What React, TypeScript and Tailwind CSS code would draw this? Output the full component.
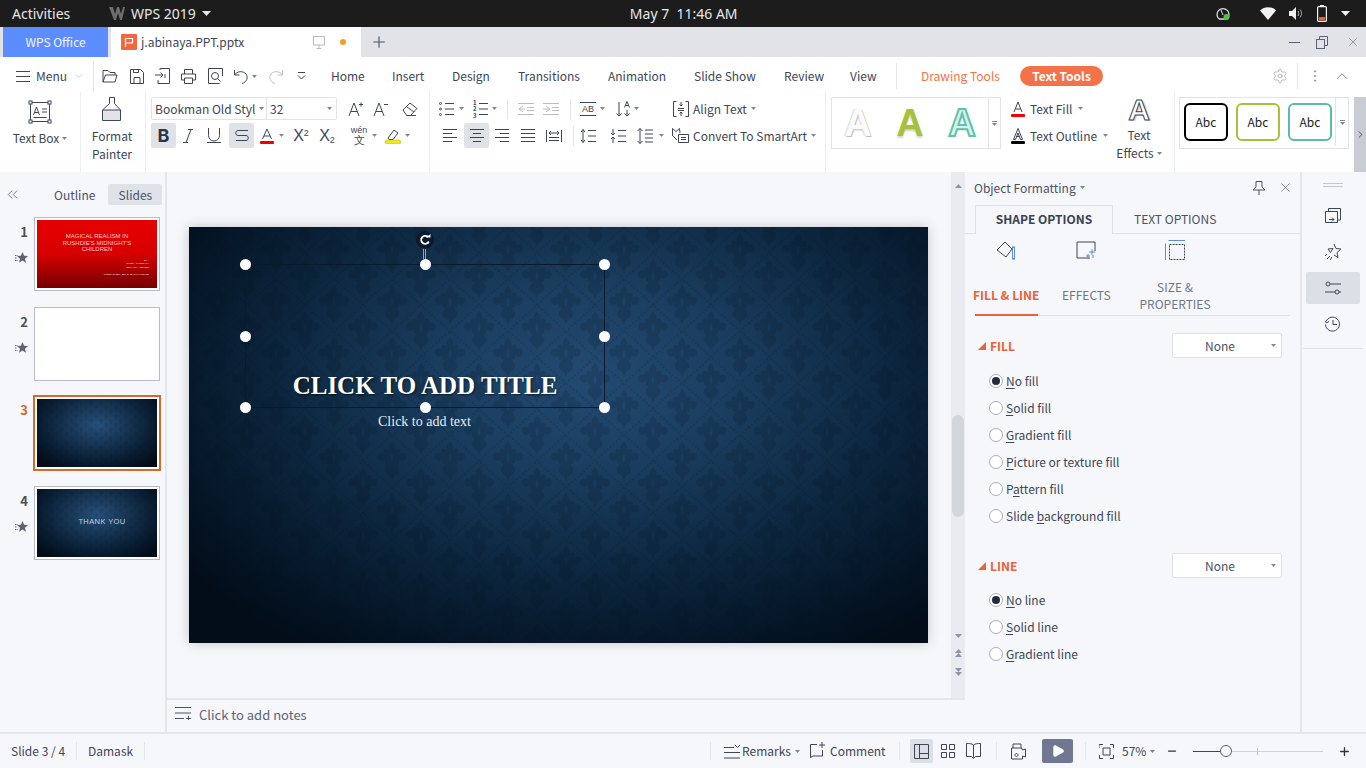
import type { ReactNode } from "react";
import { ChevronDown, ChevronUp, ChevronsLeft, ChevronRight, Minus, Plus, X, Play, Settings, MoreVertical } from "lucide-react";

const UI = "font-['Noto_Sans_CJK_SC','Noto_Sans',sans-serif]";

function Ic({ w = 16, h = 16, className = "", sw = 1, children }: { w?: number; h?: number; className?: string; sw?: number; children: ReactNode }) {
  return (
    <svg width={w} height={h} viewBox={`0 0 ${w} ${h}`} fill="none" stroke="currentColor" strokeWidth={sw} className={`shrink-0 ${className}`}>
      {children}
    </svg>
  );
}

function Caret({ className = "" }: { className?: string }) {
  return (
    <svg width="5" height="3" viewBox="0 0 5 3" className={`shrink-0 ${className}`}>
      <path d="M0 0h5L2.500 3z" fill="#7d8597" />
    </svg>
  );
}

function Sep({ className = "" }: { className?: string }) {
  return <div className={`w-px bg-[#e3e5ea] shrink-0 ${className}`} />;
}

// damask wallpaper used on the slide and the thumbnails
function Damask({ id, scale = 1, opacity = 0.15 }: { id: string; scale?: number; opacity?: number }) {
  const motif = "M0 -20C2 -16 5 -15 3 -11C7 -14 10 -11 8 -8C13 -10 17 -6 14 -2C12 1 9 0 7 -2C8 2 6 4 4 2C6 6 9 8 6 12C4 15 2 13 0 20C-2 13 -4 15 -6 12C-9 8 -6 6 -4 2C-6 4 -8 2 -7 -2C-9 0 -12 1 -14 -2C-17 -6 -13 -10 -8 -8C-10 -11 -7 -14 -3 -11C-5 -15 -2 -16 0 -20ZM0 -8C-2 -5 -2 -2 0 2C2 -2 2 -5 0 -8Z";
  return (
    <svg className="absolute inset-0 w-full h-full" style={{ opacity }}>
      <defs>
        <pattern id={id} width="58" height="52" patternUnits="userSpaceOnUse" patternTransform={`scale(${scale})`}>
          <g fill="#04121f" fillRule="evenodd">
            <path d={motif} transform="translate(29 26)" />
            <path d={motif} transform="translate(0 0)" />
            <path d={motif} transform="translate(58 0)" />
            <path d={motif} transform="translate(0 52)" />
            <path d={motif} transform="translate(58 52)" />
          </g>
          <path d="M0 26L14 13L29 0L44 13L58 26L44 39L29 52L14 39Z" stroke="#04121f" strokeWidth="2" fill="none" strokeDasharray="2 2" />
        </pattern>
      </defs>
      <rect width="100%" height="100%" fill={`url(#${id})`} />
    </svg>
  );
}

function TopBar() {
  return (
    <div className="h-[27px] bg-[#1c1c1c] text-[#e6e6e6] text-[14px] font-['Noto_Sans',sans-serif] flex items-center shrink-0">
      <span className="ml-[12px] w-[97px]">Activities</span>
      <svg width="16" height="13" viewBox="0 0 16 13" className="shrink-0">
        <path d="M0 0h4l2 7 2-7h2l2 7 2-7h2l-3 13h-2L9 6l-2 7H5z" fill="#6d6d6d" />
      </svg>
      <span className="ml-[6px]">WPS 2019</span>
      <svg width="9" height="5" viewBox="0 0 9 5" className="ml-[6px]">
        <path d="M0 0h9L4.500 5z" fill="#e6e6e6" />
      </svg>
      <span className="ml-[419px] w-[115px] whitespace-pre">May 7  11:46 AM</span>
      <svg width="14" height="15" viewBox="0 0 14 15" className="ml-[471px]">
        <path d="M3 13A6 6 0 1 1 11 13M3 13h8" fill="none" stroke="#dcdcdc" strokeWidth="1.300" />
        <path d="M5 4l2 5" stroke="#dcdcdc" />
        <circle cx="10.500" cy="11" r="3" fill="#4fc04f" />
      </svg>
      <svg width="16" height="13" viewBox="0 0 16 13" className="ml-[30px]">
        <path d="M0 3.500C4 -1 12 -1 16 3.500L8 13z" fill="#f2f2f2" />
      </svg>
      <svg width="14" height="13" viewBox="0 0 14 13" className="ml-[13px]">
        <path d="M0 4h3l4-4v13l-4-4H0z" fill="#f2f2f2" />
        <path d="M9 4c1 1.500 1 3.500 0 5M11 2.500c2 2.500 2 5.500 0 8" stroke="#bbb" fill="none" />
      </svg>
      <svg width="10" height="17" viewBox="0 0 10 17" className="ml-[14px]">
        <rect x="3" y="0" width="4" height="2" fill="#f2f2f2" />
        <rect x=".6" y="1.600" width="8.800" height="14.800" rx="1" fill="none" stroke="#f2f2f2" strokeWidth="1.200" />
        <rect x="2" y="12" width="6" height="3.500" fill="#e8622c" />
      </svg>
      <svg width="9" height="5" viewBox="0 0 9 5" className="ml-[14px]">
        <path d="M0 0h9L4.500 5z" fill="#f2f2f2" />
      </svg>
    </div>
  );
}

function TabBar() {
  return (
    <div className={`h-[30px] bg-[#e1e3e8] flex items-stretch shrink-0 text-[12px] ${UI}`}>
      <div className="ml-[3px] w-[105px] bg-[#5c8dff] text-white/90 flex items-center justify-center">WPS Office</div>
      <div className="ml-[3px] w-[250px] bg-white text-[#3e4557] flex items-center">
        <div className="ml-[10px] w-[16px] h-[16px] bg-[#f2683c] rounded-[1px] flex items-center justify-center">
          <svg width="10" height="10" viewBox="0 0 10 10">
            <path d="M1.500 10V1.500H8.500V6H1.500" fill="none" stroke="white" strokeWidth="1.200" />
          </svg>
        </div>
        <span className="ml-[4px] w-[172px]">j.abinaya.PPT.pptx</span>
        <Ic w={12} h={14} className="text-[#b6bbc6]">
          <rect x=".5" y="1.500" width="11" height="8.500" />
          <path d="M6 10v3M3.500 13.500h5" />
        </Ic>
        <div className="ml-[15px] w-[6px] h-[6px] rounded-full bg-[#f0a020]" />
      </div>
      <Plus size={18} strokeWidth={1.500} className="ml-[9px] self-center text-[#4a5266]" />
      <div className="ml-auto flex items-center text-[#5a6275]">
        <Ic w={11} h={11} className="mr-[16px]"><path d="M0 5.500h11" /></Ic>
        <Ic w={12} h={13} className="mr-[18px]">
          <rect x=".5" y="3.500" width="8" height="9" />
          <path d="M3.500 3.500V.5h8v9H8.500" />
        </Ic>
        <X size={14} strokeWidth={1} className="mr-[6px]" />
      </div>
    </div>
  );
}

const menuTabs: [string, string][] = [
  ["Home", "w-[61px]"],
  ["Insert", "w-[60px]"],
  ["Design", "w-[66px]"],
  ["Transitions", "w-[90px]"],
  ["Animation", "w-[86px]"],
  ["Slide Show", "w-[90px]"],
  ["Review", "w-[66px]"],
  ["View", "w-[46px]"],
];

function MenuRow() {
  return (
    <div className={`h-[35px] pt-[3px] bg-white flex items-center shrink-0 text-[12px] text-[#3e4557] ${UI}`}>
      <Ic w={14} h={11} className="ml-[16px]"><path d="M0 .5h14M0 5.500h14M0 10.500h14" /></Ic>
      <span className="ml-[6px] w-[29px]">Menu</span>
      <ChevronDown size={12} strokeWidth={1} className="ml-[8px] text-[#9aa0ad]" />
      <Sep className="h-[30px] ml-[8px]" />
      <Ic w={16} h={14} className="ml-[8px]"><path d="M1 13V1.500h5l2 2h5V6M1 13h12l2-7H3.500z" /></Ic>
      <Ic w={14} h={15} className="ml-[12px]"><path d="M.5.5h10l3 3v11H.5zM4 14.500V8.500h6v6M3.500.5v3h5v-3" /></Ic>
      <Ic w={15} h={16} className="ml-[11px]"><path d="M5 2V.5h9.500v15H3V12M0 7h8M5.500 4.500L8 7 5.500 9.500M10 10v-4" /></Ic>
      <Ic w={15} h={15} className="ml-[11px]"><path d="M3.500 5V.5h8V5M3 11H.5V5h14v6H12M3.500 9h8v5.500h-8z" /></Ic>
      <Ic w={15} h={16} className="ml-[12px]"><path d="M14.500 8V.5H.5v15h11" /><circle cx="7" cy="8" r="3.500" /><path d="M9.500 10.500l3 3" /></Ic>
      <Ic w={14} h={15} className="ml-[11px]"><path d="M.5 1v5h5M.5 6C3 2 9 1.500 12 5c2.500 3 1 8-4 9.500" /></Ic>
      <Caret className="ml-[4px]" />
      <Ic w={14} h={15} className="ml-[12px] text-[#b9bdc7]"><path d="M13.500 1v5h-5M13.500 6C11 2 5 1.500 2 5c-2.500 3-1 8 4 9.500" /></Ic>
      <Ic w={9} h={9} className="ml-[14px]"><path d="M1 .5h7M1 3.500L4.500 7 8 3.500" /></Ic>
      <div className="ml-[25px] flex">
        {menuTabs.map(([t, w]) => (
          <span key={t} className={`${w} whitespace-nowrap`}>{t}</span>
        ))}
      </div>
      <Sep className="h-[26px]" />
      <span className="ml-[24px] w-[79px] whitespace-nowrap text-[#f4724a]">Drawing Tools</span>
      <span className="ml-[20px] w-[83px] h-[20px] rounded-full bg-[#f4724a] text-white font-bold flex items-center justify-center whitespace-nowrap">Text Tools</span>
      <Settings size={16} strokeWidth={1} className="ml-[169px] text-[#8f95a3]" />
      <Sep className="h-[26px] ml-[9px]" />
      <MoreVertical size={16} strokeWidth={1.500} className="ml-[9px] text-[#8f95a3]" />
      <ChevronUp size={18} strokeWidth={1} className="ml-[10px] text-[#5a6275]" />
    </div>
  );
}

function BigA({ className }: { className: string }) {
  return (
    <div className="w-[52px] flex items-center justify-center">
      <span className={`font-['Liberation_Sans',sans-serif] text-[38px] leading-none font-bold ${className}`}>A</span>
    </div>
  );
}

function Ribbon() {
  return (
    <div className={`h-[80px] bg-white flex shrink-0 text-[12px] leading-[18px] text-[#3e4557] ${UI}`}>
      {/* text box */}
      <div className="w-[81px] border-r border-[#eceef2] flex flex-col items-center pt-[5px] shrink-0">
        <Ic w={24} h={24} className="mt-[3px]">
          <rect x="2.500" y="2.500" width="19" height="19" />
          <g fill="white"><rect x="1" y="1" width="3" height="3" /><rect x="20" y="1" width="3" height="3" /><rect x="1" y="20" width="3" height="3" /><rect x="20" y="20" width="3" height="3" /></g>
          <path d="M5.500 15L8.500 7l3 8M6.500 12.500h4M14 9h5M14 12h5M5.500 17.500h13" />
        </Ic>
        <div className="mt-[5px] flex items-center gap-[3px]">Text Box<Caret /></div>
      </div>
      {/* format painter */}
      <div className="w-[65px] border-r border-[#eceef2] pr-[2px] flex flex-col items-center pt-[5px] shrink-0">
        <svg width="20" height="24" viewBox="0 0 20 24" className="shrink-0">
          <rect x="1" y="13" width="18" height="10" fill="#e1e3e8" />
          <path d="M7.500 .5h5v6l6 6.500v10.500H.5V13l7-6.500zM.5 13h18" fill="none" stroke="#3e4557" />
        </svg>
        <div className="mt-[6px] leading-[18px] text-center">Format<br />Painter</div>
      </div>
      {/* font */}
      <div className="w-[284px] border-r border-[#eceef2] pl-[5px] pt-[5px] shrink-0">
        <div className="flex h-[23px] items-center">
          <div className="w-[186px] h-[23px] border border-[#e1e3e8] rounded-[2px] flex items-center">
            <span className="ml-[3px] w-[104px] whitespace-nowrap overflow-hidden">Bookman Old Styl</span>
            <Caret />
            <div className="ml-[2px] w-px h-full bg-[#e1e3e8]" />
            <span className="ml-[3px]">32</span>
            <Caret className="ml-auto mr-[4px]" />
          </div>
          <Ic w={16} h={16} className="ml-[11px]" sw={1}><path d="M1 15L6 2l5 13M3 10.500h6M11 3.500h4M13 1.500v4" /></Ic>
          <Ic w={16} h={16} className="ml-[9px]"><path d="M1 15L6 2l5 13M3 10.500h6M11 3.500h4" /></Ic>
          <Ic w={16} h={14} className="ml-[13px]"><path d="M5 13.500h9M1 8l7-7 7 5.500-7 7.500h-3zM4.500 4.500l7.500 5.500" /></Ic>
        </div>
        <div className="flex h-[25px] items-center mt-[3px]">
          <div className="w-[25px] h-[25px] bg-[#dfe2e7] rounded-[2px] flex items-center justify-center text-[18px] font-bold text-[#2c3448] font-['Inter',sans-serif]">B</div>
          <Ic w={10} h={14} className="ml-[7px]"><path d="M8 .5L3 13.500M5 .5h5M0 13.500h5" /></Ic>
          <Ic w={14} h={15} className="ml-[14px]"><path d="M1.500 0v7.500a5.500 5.500 0 0 0 11 0V0M0 14.500h14" /></Ic>
          <div className="ml-[8px] w-[25px] h-[25px] bg-[#dfe2e7] rounded-[2px] flex items-center justify-center">
            <Ic w={14} h={13}><path d="M13 1.500H3C0 1.500 0 6.500 3 6.500h8c3 0 3 5 0 5H1" /></Ic>
          </div>
          <svg width="14" height="16" viewBox="0 0 14 16" className="ml-[6px] shrink-0">
            <path d="M2.500 11L7 1l4.500 10M4 8h6" fill="none" stroke="#3e4557" />
            <rect x="0" y="13" width="14" height="3" rx="1" fill="#f00000" />
          </svg>
          <Caret className="ml-[5px]" />
          <span className="ml-[5px] w-[24px] text-center text-[16px] font-['Liberation_Sans',sans-serif] font-light">X<sup className="text-[9px]">2</sup></span>
          <span className="ml-[2px] w-[24px] text-center text-[16px] font-['Liberation_Sans',sans-serif] font-light">X<sub className="text-[9px]">2</sub></span>
          <div className="ml-[8px] w-[24px] flex flex-col items-center font-['Liberation_Sans',sans-serif] text-[9px] leading-[9px]">
            wén
            <span className="text-[11px] leading-[10px]">文</span>
          </div>
          <Caret className="ml-[1px]" />
          <svg width="16" height="16" viewBox="0 0 16 16" className="ml-[8px] shrink-0">
            <path d="M3 10l6-8 4 3-5 6.500H4z" fill="none" stroke="#3e4557" />
            <rect x="0.500" y="12" width="15" height="4" rx="1" fill="#f5e71f" stroke="#b8ae10" strokeWidth=".5" />
          </svg>
          <Caret className="ml-[4px]" />
        </div>
      </div>
      {/* paragraph */}
      <div className="w-[396px] border-r border-[#eceef2] pt-[5px] shrink-0">
        <div className="flex h-[23px] items-center">
          <Ic className="ml-[9px]" w={16} h={14}>
            <circle cx="1.500" cy="1.500" r="1" /><circle cx="1.500" cy="7" r="1" /><circle cx="1.500" cy="12.500" r="1" />
            <path d="M6 1.500h9M6 7h9M6 12.500h9" />
          </Ic>
          <Caret className="ml-[4px]" />
          <div className="ml-[9px] w-[16px] h-[14px] relative">
            <Ic w={16} h={14}><path d="M6 1.500h9M6 7h9M6 12.500h9" /></Ic>
            <span className="absolute left-0 top-[-2px] text-[6px] leading-[6.500px] font-bold">1<br />2<br />3</span>
          </div>
          <Caret className="ml-[3px]" />
          <Sep className="h-[20px] ml-[10px]" />
          <Ic className="ml-[10px] text-[#b9bdc7]" w={16} h={12}><path d="M0 .5h16M9 4.500h7M9 7.500h7M0 11.500h16M5 3L1 6l4 3M1 6h6" /></Ic>
          <Ic className="ml-[9px] text-[#b9bdc7]" w={16} h={12}><path d="M0 .5h16M9 4.500h7M9 7.500h7M0 11.500h16M3 3l4 3-4 3M0 6h6" /></Ic>
          <Sep className="h-[20px] ml-[11px]" />
          <div className="ml-[9px] w-[16px] h-[14px] border-y border-[#3e4557] text-[9px] font-['Liberation_Sans',sans-serif] leading-[12px] text-center">AB</div>
          <Caret className="ml-[4px]" />
          <Ic className="ml-[11px]" w={14} h={16}>
            <path d="M3 1v14M.5 12.500L3 15l2.500-2.500M11 9v6M8.500 12.500L11 15l2.500-2.500M8.500 6.500L11 .5l2.500 6M9.500 4.500h3" />
          </Ic>
          <Caret className="ml-[4px]" />
          <Ic className="ml-[34px]" w={16} h={16}>
            <path d="M3.500 .5H.5v15h3M12.500 .5h3v15h-3M5 7.500h6M5 9.500h6M8 1v4M6.500 3.500L8 5l1.500-1.500M8 15v-4M6.500 12.500L8 11l1.500 1.500" />
          </Ic>
          <span className="ml-[4px] w-[54px] whitespace-nowrap">Align Text</span>
          <Caret className="ml-[4px]" />
        </div>
        <div className="flex h-[25px] items-center mt-[3px]">
          <Ic className="ml-[12px]" w={16} h={13}><path d="M1 .5h14M1 4.500h9M1 8.500h14M1 12.500h9" /></Ic>
          <div className="ml-[6px] w-[25px] h-[25px] bg-[#dfe2e7] rounded-[2px] flex items-center justify-center">
            <Ic w={16} h={13}><path d="M1 .5h14M4 4.500h8M1 8.500h14M4 12.500h8" /></Ic>
          </div>
          <Ic className="ml-[5px]" w={16} h={13}><path d="M1 .5h14M6 4.500h9M1 8.500h14M6 12.500h9" /></Ic>
          <Ic className="ml-[10px]" w={16} h={13}><path d="M1 .5h14M1 4.500h14M1 8.500h14M1 12.500h14" /></Ic>
          <Ic className="ml-[10px]" w={16} h={14}><path d="M.5 1v12M15.500 1v12M3 8.500h10M3 11.500h10M3 4h10M5 2L3 4l2 2M11 2l2 2-2 2" /></Ic>
          <Sep className="h-[20px] ml-[11px]" />
          <Ic className="ml-[6px]" w={16} h={14}><path d="M3 .5v13M1 3l2-2.500L5 3M1 11l2 2.500L5 11M8 1.500h8M8 7h8M8 12.500h8" /></Ic>
          <Ic className="ml-[14px]" w={16} h={14}><path d="M3 0v6M1 4l2 2 2-2M3 14V8M1 10l2-2 2 2M8 1.500h8M8 7h8M8 12.500h8" /></Ic>
          <Ic className="ml-[11px]" w={16} h={16}><path d="M3 .5v15M.5 3L3 .5 5.500 3M.5 13L3 15.500 5.500 13M8 2h8M8 6h8M8 10h8M8 14h8" /></Ic>
          <Caret className="ml-[6px]" />
          <Ic className="ml-[8px]" w={17} h={16}><path d="M.5 8V.5L4 3.500 7.500.5 8 5M1 8l4 4M6.500 6.500h10v8h-10zM9 9.500h5M9 11.500h5" /></Ic>
          <span className="ml-[4px] w-[114px] whitespace-nowrap">Convert To SmartArt</span>
          <Caret className="ml-[4px]" />
        </div>
      </div>
      {/* art text */}
      <div className="w-[349px] border-r border-[#eceef2] pt-[5px] pl-[5px] flex shrink-0">
        <div className="w-[170px] h-[52px] border border-[#e1e3e8] flex shrink-0">
          <BigA className="text-[#fbfbfb] [text-shadow:1px_1px_1px_#b9b9b9,-1px_0_1px_#d8d8d8]" />
          <BigA className="text-[#a4c339] [text-shadow:0_2px_2px_#d5d5d5]" />
          <BigA className="text-[#d8f1ea] [-webkit-text-stroke:2px_#5fc2aa]" />
          <div className="flex-1 border-l border-[#e1e3e8] flex flex-col items-center justify-center">
            <div className="w-[5px] h-px bg-[#7d8597] mb-px" />
            <Caret />
          </div>
        </div>
        <div className="ml-[10px] w-[100px] shrink-0">
          <div className="h-[23px] flex items-center">
            <svg width="14" height="16" viewBox="0 0 14 16" className="shrink-0">
              <path d="M3 11L7 1l4 10M4.500 8h5" fill="none" stroke="#3e4557" />
              <rect y="13" width="14" height="3" rx="1" fill="#f00000" />
            </svg>
            <span className="ml-[5px]">Text Fill</span>
            <Caret className="ml-[6px]" />
          </div>
          <div className="h-[25px] mt-[3px] flex items-center">
            <svg width="14" height="16" viewBox="0 0 14 16" className="shrink-0">
              <path d="M2.500 11.500L7 .5l4.500 11h-2L7 5l-2.500 6.500zM5.500 8.500h3" fill="none" stroke="#3e4557" />
              <rect y="13" width="14" height="3" rx="1" fill="#000" />
            </svg>
            <span className="ml-[5px] whitespace-nowrap">Text Outline</span>
            <Caret className="ml-[6px]" />
          </div>
        </div>
        <div className="w-[56px] flex flex-col items-center shrink-0">
          <span className="mt-[-2px] h-[28px] font-['Liberation_Sans',sans-serif] text-[30px] leading-[30px] font-bold text-white [-webkit-text-stroke:1px_#3e4557] [text-shadow:2px_1px_0_#d5d8de]">A</span>
          <div className="mt-[3px] text-center leading-[18px]">Text<div className="flex items-center gap-[3px]">Effects<Caret /></div></div>
        </div>
      </div>
      {/* text styles */}
      <div className="flex-1 pt-[5px] pl-[4px] flex">
        <div className="w-[170px] h-[52px] border border-[#e1e3e8] flex items-center shrink-0 text-[#222] pb-[2px]">
          <div className="ml-[4px] w-[44px] h-[38px] rounded-[6px] border-2 border-black flex items-center justify-center">Abc</div>
          <div className="ml-[8px] w-[44px] h-[38px] rounded-[6px] border-2 border-[#a4c339] flex items-center justify-center">Abc</div>
          <div className="ml-[8px] w-[44px] h-[38px] rounded-[6px] border-2 border-[#5cbca6] flex items-center justify-center">Abc</div>
          <div className="ml-[3px] flex-1 h-full border-l border-[#e1e3e8] flex flex-col items-center justify-center">
            <div className="w-[5px] h-px bg-[#7d8597] mb-px" />
            <Caret />
          </div>
        </div>
        <div className="ml-auto w-[12px] h-[75px] bg-[#c9ccd2] flex items-center justify-center">
          <ChevronRight size={11} className="text-[#3e4557]" />
        </div>
      </div>
    </div>
  );
}

function StarTag() {
  return (
    <svg width="13" height="11" viewBox="0 0 13 11" className="shrink-0">
      <path d="M7.500 0l1.600 3.800 3.900.3-3 2.600.9 4-3.400-2.100-3.400 2.100.9-4-3-2.600 3.900-.3z" fill="#5b6375" />
      <path d="M0 3.500h2.500M0 6h2M0 8.500h2.500" stroke="#5b6375" strokeDasharray="1 .5" />
    </svg>
  );
}

function Thumb({ n, active, star, mt, children }: { n: number; active?: boolean; star?: boolean; mt: string; children: ReactNode }) {
  return (
    <div className={`flex ${mt}`}>
      <div className="w-[34px] shrink-0 pr-[6px] flex flex-col items-end">
        <span className={`mt-[5px] text-[13px] leading-[20px] font-bold ${active ? "text-[#d56a2c]" : "text-[#4a4f5c]"}`}>{n}</span>
        {star && <div className="mt-[10px]"><StarTag /></div>}
      </div>
      <div className={`relative bg-white p-[2px] ${active ? "border-2 border-[#d56a2c] -ml-px w-[128px] h-[76px]" : "border border-[#b9bcc2] w-[126px] h-[74px]"}`}>
        <div className="relative w-full h-full overflow-hidden">{children}</div>
      </div>
    </div>
  );
}

function DarkThumb({ id }: { id: string }) {
  return (
    <>
      <div className="absolute inset-0 bg-[radial-gradient(ellipse_65%_75%_at_50%_38%,#28527d_0%,#173554_40%,#0a2036_70%,#020d18_100%)]" />
      <Damask id={id} scale={0.17} />
    </>
  );
}

function LeftPanel() {
  return (
    <div className="w-[167px] border-r-2 border-[#e4e6ec] shrink-0 text-[#4a5266]">
      <div className="h-[45px] flex items-center">
        <ChevronsLeft size={17} strokeWidth={1} className="ml-[4px] text-[#3e4557]" />
        <span className="ml-[33px]">Outline</span>
        <span className="ml-[13px] w-[54px] h-[21px] rounded-[2px] bg-[#dfe2e8] flex items-center justify-center">Slides</span>
      </div>
      <Thumb n={1} star mt="">
        <div className="absolute inset-0 bg-[linear-gradient(#e60000_0%,#d80000_50%,#760000_100%)] text-[#f3c9c9] font-['Liberation_Sans',sans-serif] text-center">
          <div className="pt-[13px] text-[6px] leading-[6.500px]">MAGICAL REALISM IN<br />RUSHDIE'S MIDNIGHT'S<br />CHILDREN</div>
          <div className="mt-[6px] pr-[8px] text-right text-[2.500px] leading-[3.500px] font-bold">BY :<br />NAME : J.ABINAYA<br />REG. NO : 1234567</div>
          <div className="mt-[4px] pr-[8px] text-right text-[2.500px] font-bold">GUIDE NAME : Ms. R. MAHALAKSHMI</div>
        </div>
      </Thumb>
      <Thumb n={2} star mt="mt-[16px]"><div /></Thumb>
      <Thumb n={3} active mt="mt-[14px]"><DarkThumb id="t3" /></Thumb>
      <Thumb n={4} star mt="mt-[15px]">
        <DarkThumb id="t4" />
        <div className="absolute inset-0 flex items-center justify-center pl-[10px] pb-[2px] text-[7.500px] tracking-[.4px] text-[#c7d1dc] font-['Liberation_Sans',sans-serif]">THANK YOU</div>
      </Thumb>
    </div>
  );
}

function Handle({ className }: { className: string }) {
  return <div className={`absolute w-[11px] h-[11px] rounded-full bg-white ${className}`} />;
}

function Slide() {
  return (
    <div className="ml-[22px] mt-[55px] relative w-[739px] h-[416px] shadow-[0_0_12px_rgba(0,0,0,.2)] bg-[radial-gradient(ellipse_68%_78%_at_54%_36%,#234a72_0%,#1b3e60_28%,#0d2740_60%,#031120_92%,#020d18_100%)] font-['Liberation_Serif',serif]">
      <Damask id="slide" />
      <div className="absolute left-[56px] top-[37px] w-[360px] h-[144px] border border-[#0a1a2a] flex items-end justify-center pb-[6px]">
        <span className="text-white font-bold text-[25px] leading-[30px] [text-shadow:1px_1px_2px_rgba(0,0,0,.6)]">CLICK TO ADD TITLE</span>
        <Handle className="left-[-6px] top-[-6px]" />
        <Handle className="left-[174px] top-[-6px]" />
        <Handle className="right-[-6px] top-[-6px]" />
        <Handle className="left-[-6px] top-[66px]" />
        <Handle className="right-[-6px] top-[66px]" />
        <Handle className="left-[-6px] bottom-[-6px]" />
        <Handle className="left-[174px] bottom-[-6px]" />
        <Handle className="right-[-6px] bottom-[-6px]" />
        <div className="absolute left-[177px] top-[-18px] w-[3px] h-[12px] border-x border-[#9aa3ad]" />
        <div className="absolute left-[170px] top-[-34px] w-[18px] h-[18px] rounded-full bg-[#0b1b2b] flex items-center justify-center">
          <svg width="12" height="12" viewBox="0 0 12 12">
            <path d="M9.800 7.500A4 4 0 1 1 9 3" fill="none" stroke="white" strokeWidth="1.800" />
            <path d="M7 3.500h4.500V0z" fill="white" />
          </svg>
        </div>
      </div>
      <div className="absolute left-[56px] top-[186px] w-[359px] text-center text-[14px] leading-[18px] text-[#e8ecf0]">Click to add text</div>
    </div>
  );
}

function Canvas() {
  return (
    <div className="w-[798px] shrink-0 flex flex-col">
      <div className="flex-1 flex min-h-0">
        <div className="flex-1 min-w-0"><Slide /></div>
        <div className="w-[14px] shrink-0 bg-[#e9ebf0] flex flex-col items-center relative">
          <svg width="7" height="4" viewBox="0 0 7 4" className="mt-[12px]"><path d="M3.500 0L7 4H0z" fill="#8f95a8" /></svg>
          <div className="absolute left-[1px] top-[243px] w-[12px] h-[102px] rounded-[6px] bg-[#d2d5dc]" />
          <div className="mt-auto mb-[22px] flex flex-col items-center gap-[11px]">
            <svg width="7" height="4" viewBox="0 0 7 4"><path d="M0 0h7L3.500 4z" fill="#8f95a8" /></svg>
            <svg width="7" height="8" viewBox="0 0 7 8"><path d="M3.500 0L7 4H0zM3.500 4L7 8H0z" fill="#8f95a8" /></svg>
            <svg width="7" height="8" viewBox="0 0 7 8"><path d="M0 0h7L3.500 4zM0 4h7L3.500 8z" fill="#8f95a8" /></svg>
          </div>
        </div>
      </div>
      <div className="h-[34px] border-t-2 border-[#e4e6ec] pb-[3px] flex items-center shrink-0">
        <Ic w={16} h={13} className="ml-[8px] mb-[2px] text-[#4a5266]"><path d="M0 .5h16M0 6h16M0 11.500h9M11 11.500h5M13.500 9v5" /></Ic>
        <span className="ml-[8px] text-[13px] text-[#5c6478]">Click to add notes</span>
      </div>
    </div>
  );
}

const radiosFill: [string, string, string, boolean][] = [
  ["", "N", "o fill", true],
  ["", "S", "olid fill", false],
  ["", "G", "radient fill", false],
  ["", "P", "icture or texture fill", false],
  ["P", "a", "ttern fill", false],
  ["Slide ", "b", "ackground fill", false],
];

const radiosLine: [string, string, string, boolean][] = [
  ["", "N", "o line", true],
  ["", "S", "olid line", false],
  ["", "G", "radient line", false],
];

function Radio({ pre, key2, post, on }: { pre: string; key2: string; post: string; on: boolean }) {
  return (
    <div className="h-[27px] flex items-center pl-[24px]">
      <div className="w-[14px] h-[14px] rounded-full border border-[#a9afbb] bg-white flex items-center justify-center shrink-0">
        {on && <div className="w-[8px] h-[8px] rounded-full bg-[#232a3d]" />}
      </div>
      <span className="ml-[3px] text-[#3e4557]">
        {pre}
        <span className="underline underline-offset-2 decoration-1">{key2}</span>
        {post}
      </span>
    </div>
  );
}

function Section({ title, mt }: { title: string; mt: string }) {
  return (
    <div className={`flex items-center ${mt}`}>
      <svg width="8" height="8" viewBox="0 0 8 8" className="ml-[13px] shrink-0"><path d="M8 0v8H0z" fill="#e8623a" /></svg>
      <span className="ml-[4px] font-bold text-[#e8623a]">{title}</span>
      <div className="ml-auto mr-[18px] w-[110px] h-[25px] bg-white border border-[#dfe1e7] rounded-[2px] flex items-center relative">
        <span className="w-full text-center text-[#4a5266] pr-[14px]">None</span>
        <Caret className="absolute right-[5px]" />
      </div>
    </div>
  );
}

function RightPanel() {
  return (
    <div className="w-[337px] border-r-2 border-[#e4e6ec] shrink-0 text-[#4a5266]">
      <div className="h-[33px] pb-[2px] flex items-center">
        <span className="ml-[9px] w-[102px] whitespace-nowrap">Object Formatting</span>
        <Caret className="ml-[4px]" />
        <Ic w={14} h={14} className="ml-[167px]"><path d="M4 .5h6L10 6l3 3H1l3-3zM7 9v5" /></Ic>
        <X size={15} strokeWidth={1} className="ml-[12px]" />
      </div>
      <div className="h-[29px] flex border-b border-[#dfe1e7] relative">
        <div className="ml-[10px] w-[138px] h-[29px] pb-[2px] border border-b-0 border-[#dfe1e7] bg-[#f6f7fa] flex items-center justify-center font-bold text-[#3a4155]">SHAPE OPTIONS</div>
        <div className="ml-[21px] pb-[1px] flex items-center">TEXT OPTIONS</div>
      </div>
      <div className="h-[33px] pb-[2px] flex items-center">
        <svg width="20" height="20" viewBox="0 0 20 20" className="ml-[31px] shrink-0">
          <path d="M1 10l8-8 7 7-6 8z" fill="none" stroke="#3e4557" />
          <path d="M4 7l5-5" stroke="#3e4557" />
          <rect x="16.500" y="7" width="2" height="12" fill="none" stroke="#5b8bd9" />
        </svg>
        <svg width="20" height="18" viewBox="0 0 20 18" className="ml-[60px] shrink-0">
          <path d="M14 17H1V1h18v9" fill="none" stroke="#3e4557" />
          <path d="M16 8v6M13 11h6M12 13v4M10 15h4M17 14v3" stroke="#5b8bd9" />
        </svg>
        <svg width="20" height="20" viewBox="0 0 20 20" className="ml-[69px] shrink-0">
          <rect x="4.500" y="4.500" width="15" height="15" fill="none" stroke="#3e4557" strokeDasharray="2 1" />
          <path d="M4 .5h16M4 0v1M20 0v1M.5 4v16M0 4h1M0 20h1" stroke="#5b8bd9" />
        </svg>
      </div>
      <div className="mx-[10px] w-[315px] h-[49px] pt-[8px] flex items-center border-b border-[#dfe1e7] relative">
        <span className="font-bold text-[#e8623a] ml-[-2px] w-[66px] whitespace-nowrap">FILL &amp; LINE</span>
        <span className="ml-[23px] w-[48px] text-[#6f7689]">EFFECTS</span>
        <span className="ml-[29px] w-[72px] text-center leading-[17px] text-[#6f7689]">SIZE &amp; PROPERTIES</span>
        <div className="absolute left-0 bottom-[-1px] w-[63px] h-[2px] bg-[#e8623a]" />
      </div>
      <Section title="FILL" mt="mt-[17px]" />
      <div className="mt-[9px]">
        {radiosFill.map(([a, b, c, on]) => <Radio key={a + b + c} pre={a} key2={b} post={c} on={on} />)}
      </div>
      <Section title="LINE" mt="mt-[24px]" />
      <div className="mt-[8px]">
        {radiosLine.map(([a, b, c, on]) => <Radio key={a + b + c} pre={a} key2={b} post={c} on={on} />)}
      </div>
    </div>
  );
}

function Rail() {
  return (
    <div className="w-[64px] shrink-0 pr-[2px] flex flex-col items-center text-[#3e4557]">
      <div className="mt-[11px] w-[20px] h-[4px] border-y border-[#c4c7cf]" />
      <Ic w={16} h={16} className="mt-[21px]"><path d="M3.500 3V.5h12V12H13M.5 3.500h12v11H.5zM4 11.500h5M7 9.500l2 2-2 2" /></Ic>
      <Ic w={18} h={18} className="mt-[19px]"><path d="M10 1l2 4.500 5 .5-4 3.500 1 5-4-2.500M6.500 9.500L4 6l5-.5zM6 13L3 16M3 11l-2 2M8 14l-2 3" /></Ic>
      <div className="mt-[11px] w-[54px] h-[32px] bg-[#dcdfe6] rounded-[2px] flex items-center justify-center">
        <Ic w={16} h={14}><circle cx="3" cy="3" r="2" /><path d="M5 3h11M0 11h10" /><circle cx="12" cy="11" r="2" /><path d="M14 11h2" /></Ic>
      </div>
      <Ic w={16} h={16} className="mt-[12px]"><path d="M1 5.500a7 7 0 1 1-.5 3M0 5l1.500 2L4 5.500M8 4v4.500h4" /></Ic>
      <div className="mt-[16px] w-[60px] h-px bg-[#dfe1e7]" />
    </div>
  );
}

function StatusBar() {
  return (
    <div className={`h-[36px] border-t-2 border-[#e4e6ec] flex items-center shrink-0 text-[12px] text-[#3e4557] ${UI}`}>
      <span className="ml-[11px] w-[54px] whitespace-nowrap">Slide 3 / 4</span>
      <Sep className="h-[18px] ml-[11px]" />
      <span className="ml-[11px] w-[45px]">Damask</span>
      <Sep className="h-[18px] ml-[11px]" />
      <Sep className="h-[18px] ml-[565px]" />
      <Ic w={16} h={15} className="ml-[13px]"><path d="M0 3.500h10M0 8.500h16M0 14h16M11 1l2.500 2.500L16 1" /></Ic>
      <span className="ml-[2px] w-[49px]">Remarks</span>
      <Caret className="ml-[4px]" />
      <Ic w={16} h={18} className="ml-[10px]"><path d="M7 2.500H.5v13L3 14h9.500V8M12 0v6M9 3h6" /></Ic>
      <span className="ml-[4px] w-[55px] whitespace-nowrap">Comment</span>
      <Sep className="h-[18px] ml-[14px]" />
      <div className="ml-[10px] w-[23px] h-[24px] bg-[#dcdfe6] rounded-[2px] flex items-center justify-center">
        <Ic w={15} h={15}><path d="M.5.5h14v14H.5zM5.500.5v14M5.500 9.500h9" /></Ic>
      </div>
      <Ic w={14} h={14} className="ml-[8px]"><path d="M.5.5h5v5h-5zM8.500.5h5v5h-5zM.5 8.500h5v5h-5zM8.500 8.500h5v5h-5z" /></Ic>
      <Ic w={15} h={16} className="ml-[11px]"><path d="M7.500 2v12.500M7.500 2C6 .5 3 .5.500.5v13h5l2 2 2-2h5V.5c-2.500 0-5.500 0-7 1.500" /></Ic>
      <Sep className="h-[18px] ml-[15px]" />
      <Ic w={16} h={18} className="ml-[14px]"><path d="M2 6V2h8v4M.5 6h10l1 2 3-1v8l-3-1v3H.5zM5.500 11.500a1.500 1.500 0 1 0 .01 0" /></Ic>
      <div className="ml-[15px] w-[31px] h-[24px] bg-[#6f7890] rounded-[2px] flex items-center justify-center">
        <Play size={14} className="text-white" fill="white" />
      </div>
      <Sep className="h-[18px] ml-[12px]" />
      <Ic w={15} h={15} className="ml-[13px]"><path d="M0 4V.5h4M11 .5h3.500V4M14.500 11v3.500H11M4 14.500H.5V11M4 4h7v7H4z" /></Ic>
      <span className="ml-[8px] w-[24px]">57%</span>
      <Caret className="ml-[4px]" />
      <Minus size={12} strokeWidth={2.500} className="ml-[11px] text-[#2c3448]" />
      <div className="ml-[15px] w-[130px] h-[14px] relative flex items-center">
        <div className="w-[27px] h-px bg-[#3e4557]" />
        <div className="flex-1 h-px bg-[#d0d3da]" />
        <div className="absolute left-[27px] w-[12px] h-[12px] rounded-full border border-[#5a6275] bg-[#f6f7fa]" />
        <div className="absolute left-[64px] w-px h-[7px] bg-[#c4c7cf]" />
      </div>
      <Plus size={13} strokeWidth={2.500} className="ml-[15px] text-[#2c3448]" />
    </div>
  );
}

export default function App() {
  return (
    <div className="w-[1366px] h-[768px] overflow-hidden flex flex-col bg-[#f6f7fa]">
      <TopBar />
      <TabBar />
      <MenuRow />
      <Ribbon />
      <div className={`flex-1 flex min-h-0 text-[12px] ${UI}`}>
        <LeftPanel />
        <Canvas />
        <RightPanel />
        <Rail />
      </div>
      <StatusBar />
    </div>
  );
}
